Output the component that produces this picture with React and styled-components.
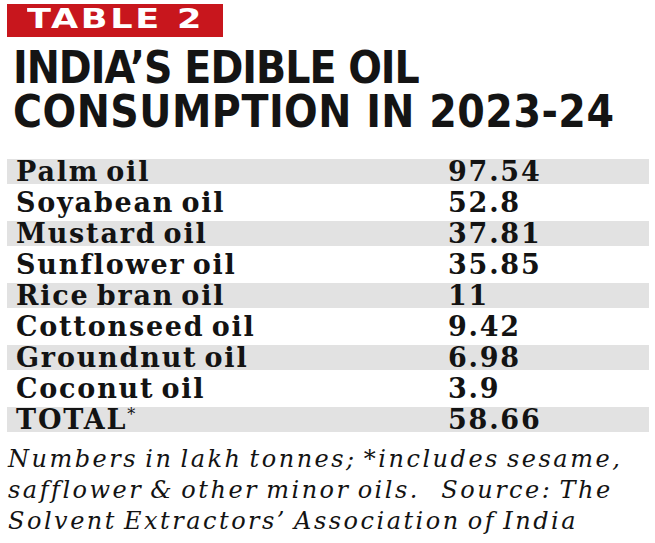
import styled, { createGlobalStyle } from "styled-components"

const GlobalStyle = createGlobalStyle`
  html, body {
    margin: 0;
    padding: 0;
    background: #ffffff;
  }
  body {
    width: 655px;
    height: 543px;
    overflow: hidden;
  }
`

const rows = [
  { name: "Palm oil", value: "97.54" },
  { name: "Soyabean oil", value: "52.8" },
  { name: "Mustard oil", value: "37.81" },
  { name: "Sunflower oil", value: "35.85" },
  { name: "Rice bran oil", value: "11" },
  { name: "Cottonseed oil", value: "9.42" },
  { name: "Groundnut oil", value: "6.98" },
  { name: "Coconut oil", value: "3.9" },
  { name: "TOTAL*", value: "58.66" },
]

const Card = styled.div`
  display: flex;
  flex-direction: column;
  padding: 4px 6px 0 7px;
  color: #131313;
`

const Badge = styled.div`
  width: 216px;
  height: 33px;
  background-color: #c8161d;
  color: #ffffff;
  display: flex;
  align-items: flex-start;
`

const BadgeText = styled.span`
  display: inline-block;
  margin-left: 20px;
  font-family: "DejaVu Sans", "Liberation Sans", sans-serif;
  font-weight: 700;
  font-size: 26px;
  line-height: 30px;
  letter-spacing: 2px;
  transform: scaleX(1.35);
  transform-origin: left center;
  white-space: nowrap;
`

const Title = styled.h1`
  margin: 9px 0 0 6px;
  font-family: "DejaVu Sans Condensed", "DejaVu Sans", sans-serif;
  font-stretch: condensed;
  font-weight: 700;
  font-size: 44px;
  line-height: 44px;
  color: #141414;
`

const TitleLine = styled.span`
  display: block;
  height: 44px;
  letter-spacing: ${(p) => p.$spacing}px;
  white-space: nowrap;
`

const Table = styled.div`
  margin-top: 25px;
  display: flex;
  flex-direction: column;
`

const Row = styled.div`
  display: grid;
  grid-template-columns: 432px 1fr;
  height: 25px;
  margin-bottom: 6px;
  padding-left: 9px;
  background-color: ${(p) => (p.$shaded ? "#e2e2e2" : "transparent")};
  font-family: "DejaVu Serif", "Liberation Serif", serif;
  font-weight: 700;
  font-size: 27px;
  line-height: 25px;
  letter-spacing: 1.8px;
  word-spacing: -4px;
  white-space: nowrap;
`

const Star = styled.sup`
  font-size: 16px;
  line-height: 0;
  vertical-align: 9px;
  font-weight: 400;
`

const Note = styled.p`
  margin: 6px 0 0 1px;
  font-family: "DejaVu Serif", "Liberation Serif", serif;
  font-style: italic;
  font-size: 24px;
  line-height: 31px;
  letter-spacing: 2.5px;
  word-spacing: -3px;
  white-space: pre;
`

const NoteLine = styled.span`
  display: block;
`

const renderName = (name) => {
  if (name.endsWith("*")) {
    return (
      <>
        {name.slice(0, -1)}
        <Star>*</Star>
      </>
    )
  }
  return name
}

const App = () => {
  return (
    <>
      <GlobalStyle />
      <Card>
        <Badge>
          <BadgeText>TABLE 2</BadgeText>
        </Badge>
        <Title>
          <TitleLine $spacing={-1}>INDIA’S EDIBLE OIL</TitleLine>
          <TitleLine $spacing={0.5}>CONSUMPTION IN 2023-24</TitleLine>
        </Title>
        <Table>
          {rows.map((row, i) => (
            <Row key={row.name} $shaded={i % 2 === 0}>
              <span>{renderName(row.name)}</span>
              <span>{row.value}</span>
            </Row>
          ))}
        </Table>
        <Note>
          <NoteLine>Numbers in lakh tonnes; *includes sesame,</NoteLine>
          <NoteLine>safflower &amp; other minor oils.   Source: The</NoteLine>
          <NoteLine>Solvent Extractors’ Association of India</NoteLine>
        </Note>
      </Card>
    </>
  )
}

export default App
